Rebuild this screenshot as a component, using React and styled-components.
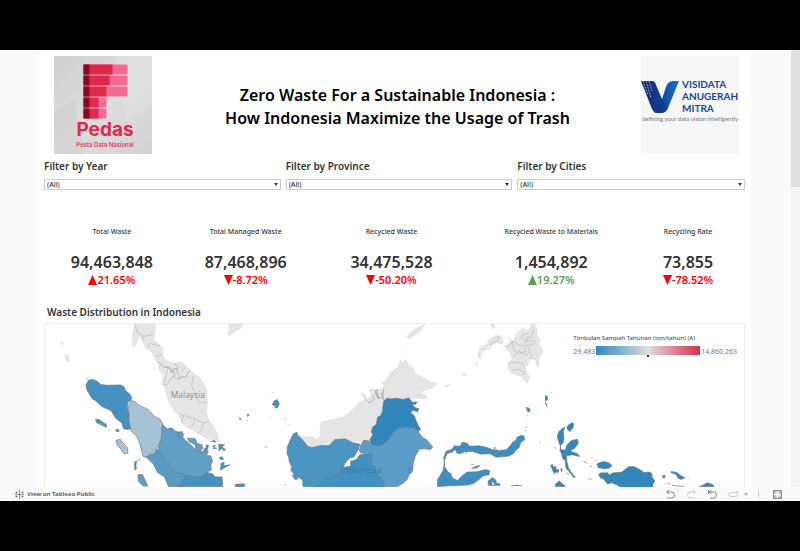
import React from "react";
import styled, { createGlobalStyle } from "styled-components";

const Global = createGlobalStyle`
  * { box-sizing: border-box; }
  body { margin: 0; background: #000; color: #333; font-family: "Noto Sans", "Open Sans", sans-serif; }
  h1, h2, p { margin: 0; }
`;

const Stage = styled.div`
  display: flex;
  flex-direction: column;
  height: 100vh;
  padding: 50px 0;
  background: #000;
`;

const Viewport = styled.div`
  flex: 1;
  min-height: 0;
  display: flex;
  background: #fafafa;
`;

const Canvas = styled.div`
  flex: 1;
  min-width: 0;
  display: flex;
  padding: 0 40px 0 38px;
`;

const Sheet = styled.main`
  flex: 1;
  min-width: 0;
  display: flex;
  flex-direction: column;
  padding: 6px 6px 0;
  background: #fff;
`;

const Track = styled.div`
  width: 9px;
  background: #f5f5f5;
`;

const Thumb = styled.div`
  height: 137px;
  background: #e0e0e0;
`;

const Header = styled.header`
  display: flex;
  justify-content: space-between;
  align-items: flex-start;
  padding: 0 6px 0 10px;
`;

const Logo = styled.svg`
  flex: none;
  display: block;
  width: 98px;
  height: 98px;
`;

const Title = styled.h1`
  padding: 28px 0 0 2px;
  color: #000;
  font-size: 16px;
  font-weight: 600;
  line-height: 23px;
  text-align: center;
`;

const Filters = styled.div`
  display: grid;
  grid-template-columns: 237fr 227fr 228fr;
  gap: 5px;
  padding-top: 5px;
`;

const Field = styled.label`
  display: flex;
  flex-direction: column;
  gap: 6px;
  font-size: 10px;
  font-weight: 600;
  line-height: 14px;
`;

const SelectWrap = styled.span`
  display: flex;
  align-items: center;
  border: 1px solid #ccc;
`;

const Select = styled.select`
  flex: 1;
  height: 9px;
  padding: 0 2px;
  border: 0;
  appearance: none;
  background: #fff;
  color: #333;
  font: 500 7px/9px "Noto Sans", sans-serif;
`;

const Caret = styled.svg`
  width: 4px;
  height: 3px;
  margin-right: 2px;
`;

const Metrics = styled.section`
  display: grid;
  grid-template-columns: 136fr 132fr 160fr 160fr 114fr;
  padding-top: 37px;
  text-align: center;
`;

const MetricName = styled.h2`
  font-size: 7px;
  font-weight: 500;
  line-height: 10px;
`;

const MetricValue = styled.p`
  padding-top: 14px;
  font-size: 16px;
  font-weight: 600;
  line-height: 22px;
`;

const MetricChange = styled.p`
  display: flex;
  justify-content: center;
  align-items: center;
  color: ${(p) => (p.$good ? "#59a14f" : "#ff0000")};
  font-size: 11px;
  font-weight: 600;
  line-height: 14px;
`;

const Arrow = styled.svg`
  width: 9px;
  height: 10px;
  fill: currentColor;
`;

const SectionTitle = styled.h2`
  padding: 18px 3px 4px;
  font-size: 10px;
  font-weight: 600;
  line-height: 14px;
`;

const MapPanel = styled.section`
  position: relative;
  flex: 1;
  min-height: 0;
  overflow: hidden;
  border: 1px solid #eee;
  border-bottom: 0;
`;

const MapDrawing = styled.svg`
  display: block;
  width: 100%;
  font-family: "Noto Sans", sans-serif;
`;

const Legend = styled.div`
  position: absolute;
  top: 9px;
  right: 7px;
  color: #555;
  font-size: 6px;
  font-weight: 500;
  line-height: 10px;
`;

const LegendRow = styled.div`
  display: flex;
  align-items: center;
  gap: 1px;
  padding-top: 3px;
  color: #777;
  font-size: 7px;
  font-weight: 400;
`;

const Ramp = styled.svg`
  width: 104px;
  height: 11px;
`;

const Footer = styled.footer`
  display: flex;
  align-items: center;
  justify-content: space-between;
  height: 14px;
  padding: 0 17px 0 15px;
  background: #fafafa;
`;

const FooterLink = styled.a`
  display: flex;
  align-items: center;
  gap: 3px;
  color: #666;
  font: 700 6px/10px "Noto Sans", sans-serif;
  text-decoration: none;
`;

const Tools = styled.div`
  display: flex;
  align-items: center;
  gap: ${(p) => (p.$tight ? 5 : 10)}px;
`;

const ToolButton = styled.button`
  display: flex;
  padding: 0;
  border: 0;
  background: none;
  color: ${(p) => (p.$dim ? "#ccc" : "#888")};
`;

const ToolIcon = styled.svg`
  width: ${(p) => p.$w || 11}px;
  height: 11px;
  fill: none;
  stroke: currentColor;
`;

const Divider = styled.span`
  width: 1px;
  height: 7px;
  margin-right: 3px;
  background: #ccc;
`;

const filters = ["Filter by Year", "Filter by Province", "Filter by Cities"];

const metrics = [
  { name: "Total Waste", value: "94,463,848", change: "21.65%", up: true },
  { name: "Total Managed Waste", value: "87,468,896", change: "-8.72%" },
  { name: "Recycled Waste", value: "34,475,528", change: "-50.20%" },
  { name: "Recycled Waste to Materials", value: "1,454,892", change: "19.27%", up: true, good: true },
  { name: "Recycling Rate", value: "73,855", change: "-78.52%" },
];

const bars = [
  [0, 29, 44],
  [11, 26, 44],
  [22, 23, 44],
  [33, 15, 23],
  [44, 15, 23],
];

function PedasLogo() {
  return (
    <Logo viewBox="0 0 98 98" role="img" aria-label="Pedas, Pesta Data Nasional">
      <defs>
        <linearGradient id="paper" x1="0" y1="0" x2="1" y2="1">
          <stop offset="0" stopColor="#cfcfd0" />
          <stop offset=".5" stopColor="#dededf" />
          <stop offset="1" stopColor="#d2d2d3" />
        </linearGradient>
      </defs>
      <path fill="url(#paper)" d="M0 0h98v98H0z" />
      <path fill="#c8c8c9" opacity=".4" d="M0 55l21-12 9 55H0z" />
      <path fill="#e4e4e4" opacity=".4" d="M60 0h38v50L73 66z" />
      {bars.map(([y, mid, end]) => (
        <g key={y} transform={`translate(29.500 ${y + 8.500})`}>
          <rect width={end} height="10" rx="1" fill="#f46a91" />
          <path fill="#df294c" d={`M0 0H${mid}V10H0z`} />
          <path fill="#850b20" d="M0 0h6v10H0z" />
        </g>
      ))}
      <text x="51" y="80" textAnchor="middle" fontFamily="Inter, sans-serif" fontSize="19" fontWeight="700" fill="#df294c">Pedas</text>
      <text x="51" y="91" textAnchor="middle" fontFamily="Inter, sans-serif" fontSize="6" fontWeight="500" fill="#df294c">Pesta Data Nasional</text>
    </Logo>
  );
}

function VisidataLogo() {
  return (
    <Logo viewBox="0 0 98 98" role="img" aria-label="Visidata Anugerah Mitra">
      <defs>
        <linearGradient id="vee" x1="0" y1="0" x2="1" y2="0">
          <stop offset="0" stopColor="#0b2968" />
          <stop offset=".5" stopColor="#143c94" />
          <stop offset="1" stopColor="#127ac8" />
        </linearGradient>
      </defs>
      <path fill="#f6f6f6" d="M0 0h98v98H0z" />
      <path fill="url(#vee)" d="M0 25h11q3 0 4 4l6 14 4-12q2-6 7-6h6L27 52q-2 5-7 5h-4q-3 0-5-4z" />
      <path fill="none" stroke="#f6f6f6" strokeWidth=".6" strokeDasharray="2 1" d="M2 25l5 14M5 25l5 17M8 25l3 10" />
      <path fill="#0a2f7d" d="M21 43l-8 14h7q5 0 7-5z" opacity=".45" />
      <g fontFamily="Lato, sans-serif" fontSize="10" fontWeight="700" fill="#17469b">
        <text x="41" y="32">VISIDATA</text>
        <text x="41" y="44">ANUGERAH</text>
        <text x="41" y="56">MITRA</text>
      </g>
      <text x="49" y="65" textAnchor="middle" fontFamily="Lato, sans-serif" fontSize="6" fill="#777">defining your data vision intelligently</text>
    </Logo>
  );
}

const land = { fill: "#e5e5e5", stroke: "#dcdcdc", strokeWidth: 1 };
const border = { fill: "none", stroke: "#b8b8b8", strokeWidth: 2 };
const edge = { stroke: "#77797b", strokeWidth: 2, strokeLinejoin: "round" };

function WasteMap() {
  return (
    <MapDrawing viewBox="0 0 700 163" role="img" aria-label="Map of waste by province">
      {/* Malay Peninsula and Sumatra */}
      <g transform="translate(-4 -4) scale(.333333)">
        <path {...land} d="M280 12H341L345 24 341 46 338 56 353 72 365 84 367 108 376 122 400 130 419 124 432 132 444 148 462 162 480 175 497 206 501 248 497 275 505 302 518 319 531 342 536 365 523 368 508 358 490 354 468 338 445 326 424 310 412 286 396 267 381 241 374 209 362 183 368 168 356 151 351 133 342 114 333 97 314 84 305 65 295 49 286 74 276 81 274 51z" />
        <path {...border} d="M283 14l7 25 17 10 21-3 10-4M305 62l4-14M322 82l6-11 17 4 15 3M346 110l18-7M382 143l-9 33-5 20 12-3 14-23 17 9M418 177l-9-24 1-16-14-8M421 155l13-12M457 169l-4 30 14 28 6 22 25-1M421 309l7-23 33 11 27 12 18-5M424 288l-4-10M461 297l-4 19-14 9M488 309l-8 24-10 7" />
        <path fill="none" stroke="#8f8f8f" strokeWidth="2" d="M352 125l16 16 19 3 5 15 8-13 12 2M411 179l11-8 14 1 5-11 6-10M392 148l8 8 0 15" />
        <path {...land} d="M562 12h38v14l-15 5-20 16-4-7 5-14zM32 19l5 3-3 3zM59 63l9 8-3 8zM73 104l8 3 4 17-8 1-4-10zM337 137l7 9-5 4z" />
        <path fill="#4592c2" {...edge} d="M142 181l14-3 14 7 9 9 23 2 37-1 10 5 5 12 14 12 5 13-12 10-2 18 6 16-1 22 7 24-11 2-12-2-5-17-19-15-13-22-28-13-20-18-10-6-7-12-9-16-2-11z" />
        <path fill="#a6c3d6" {...edge} d="M261 264l8-22 14 3 10 10 29 14 18 20 18 9 8 15-3 17 5 27-5 15-11 4-6 10 3 12-17-1-13 15-12-1-9-35-9-27-18-15-7-33 1-22z" />
        <path fill="#609fc6" {...edge} d="M365 314l14 13 14-3 11 10 10 3 17 21 15 14 15 13 14 11 13-1 5-11 10 10-6 12 12 3 7 14-6 13 2 14-13 8-4 10-14 1-10 9-16 1-21-3-22-9-17-3-3-17-20-17-10-12-15-4-5-12 9-12 4-16 6-18z" />
        <path fill="#5a9bc4" {...edge} d="M316 412l17-10 13-1 0-14 13 15 4 10 20 16 5 18 20 12 21 5 6 13-8 12-1 12h-43l-12-28-21-14-13-26z" />
        <path fill="#4492c3" {...edge} d="M408 501l18-8 2-16 8-12 26 6 20-1 18-12 17 5 5 8 16 1 6-1 2 30z" />
        <path fill="#609fc6" {...edge} d="M291 465l14-1 16 35h-14l-14-14zM411 337l13-2 4 9-3 9-12-2zM440 355l23 1 7 15 13 3 3 13-10 8-9-3-5-19-17-7z" />
        <path fill="#a6c3d6" {...edge} d="M225 362l13-4 9 12 13 14 1 16-12 2-10-16-9-7z" />
        <path fill="#4492c3" {...edge} d="M164 299l9-1 14 10 9 5 1 9-11-4-11-6-8-3zM202 331l3 3M224 330l8-2 3 6-8 2zM136 176l4 2M144 170l3 3M282 425l5-1-2 13 2 10-5 4-1-14zM288 421l12-1M283 350l6 4M495 375l8 2-2 11-7-2 2 12M514 379l10-2-8 10 14-2M534 373l18 2-9 5 12 10-13-3-7 7zM544 392l10 1M506 405l9 7M500 428l7 2M535 413l10-2 3 8-11-1M539 432l11-5-1 11 18-3-14 8-13 8-1-9M584 496l13-3 6 8h-18zM482 402l11-6M509 366l12-4 5 5" />
        <text x="390" y="234" fontSize="25" fill="#858585" stroke="#f1f1f1" strokeWidth="2" paintOrder="stroke">Malaysia</text>
      </g>
      {/* Borneo */}
      <g transform="translate(185 -4) scale(.333333)">
        <path {...land} d="M202 342L230 351 248 350 261 360 272 350 271 330 274 305 307 299 337 293 356 280 377 262 391 245 414 236 428 226 440 210 458 205 465 196 455 190 470 180 482 160 496 148 508 138 512 120 519 130 528 117 537 134 550 142 556 160 580 172 605 186 620 190 614 202 590 210 573 218 594 228 590 236 560 236 520 240 470 245 460 300 430 370 400 368 340 362 300 385 240 388z" />
        <path {...land} d="M532 49l20-19 20-11 17-7-19 24-20 14-13 6zM522 72l3 8M646 199l14-5v4l-12 4M530 92l-5 15M0 23l12-11h32l-20 15-13 13-11 7M588 331h4" />
        <path {...border} stroke="#9c9c9c" d="M394 222l10 4 4 12 10 11 12-6 3-9-11-22 8-3 9 14 8 14-10-26 6-1 3 23 13 1-2-18M463 206l-3 20 2 15" />
        <path fill="#4b95c3" {...edge} d="M191 342l11-5 2 9 11 10 20 24 12 3 26-6 25 1 18-19 31-2 21 11 23 5-5 16-12 22-15 4-13 16-8 18-38 6-20 14-19 10-14 13-15 8h-11l-2-20-12-7-8 8-12-15 8-1-11-13 2-12-7-14-2-14-5-10 1-21 7-16z" />
        <path fill="#4b95c3" d="M219 500v-20l60-30 85-12-20 20-34 14-23 13-28 17z" />
        <path fill="#4190c2" {...edge} d="M257 502l10-11 23-16 34-16 20-1 19-20-1-13 19-6 9-14 23-3 20-5 8 12-9 10 8 17 2 14 12 15 17 15-5 13 1 11z" />
        <path fill="#5b9dc6" {...edge} d="M389 392l5-17 9-14 17 3 8 8 20 6 17-7 14-14 11-20 14-13 19-7 25 1 16 8 5 14 11 13 13 8 10 13 7 7-7 8-18-2-16 1-12 22-6 22-1 21-10 10-8 18-11 9-16 10h-46l5-15-10-9-12-16-4-18-10-8-4-10 6-14-7-13-17 4-13-2z" />
        <path fill="#3087ba" {...edge} d="M422 358l8-14-5-8 5-15 10-7 4-22 10-5 5-14 3-29 10-9 14 2 17-2 17 4 18-5 11 13 14-1-4 7-11 1 10 10 10 2-3 10-16-5-5 8 11 9 3 10 6 14 9 16-4 5-22-10-24-1-20 5-15 15-10 17-17 14-14 5-20-4z" />
        <path fill="#4190c2" {...edge} d="M133 243l10-4 6 13-5 11-6 2-2-7-8-4zM126 217l3 2M29 294l5 2-3 5zM51 283l7 1-4 7M52 300l2 3M119 294h2M165 296l4 1M174 314l3 1M105 383l8-3M14 496l12-4 3 8M31 493l13-1v8h-14M165 497l5-3M191 478l8-9M537 442l10 4-9 8 9 3-7 5" />
        <text x="331" y="459" fontSize="27" fill="#347fac">Indonesia</text>
      </g>
      {/* Mindanao, Sulawesi and Maluku */}
      <g transform="translate(385 -4) scale(.333333)">
        <path {...land} d="M304 12h12l7 11 1 22 9 14-3 15 9 13 0 18-11 8 0 29-7-6-2-15-13-6-8 12-3 12-8-3-2 14 13 12 3 9-8 20-10-9-4-12-18-4-18-8-8-17 2-12 11-14-5-17-13-10 4-17 19-12 9-19 18-16 12 7 10-6zM153 81l17-6 10-18 15-8 12-5 12 10 3 14-10 6-8-8-11 8-12 1-14 12-12 15-2 16-8-4 2-18zM182 12h13l2 10-9 4zM137 126l8 5-3 8zM94 163l17-1 4 2-12 3zM0 187l12 1 10 5-9 8-13 4zM46 199l19-6M206 29l4 3" />
        <path {...border} d="M208 48l-5 17-14 2-10 19-15 3M221 81l18-1 12-17 24 16 14-8 4-20 12 2 10-26M238 55l11 13 5 24 16 8 18-5 2-18 22-4 9-10M253 110l15-18 20 14 13-9-1-17M281 55l11 9 23-2M236 132l13-6 31 5 10 18-9 17M247 151l21-3 14 8M299 96l9 10-6 8 12 3M273 57l11-15 14-2" />
        <path fill="#3d8fc1" {...edge} d="M24 500v-20l17-28 5-29-4-7 8-22 18-6 7-10 18 1 5-12 16 3 5 9 29-1 22 4 20 8 18 2 22-2 11-11 9-12 10-6 3-9 14-6 7 3 2 10-12 10-5 15-8 5-8 12-16 8-20 2-17 1-18-10-27 1-25-8-24 1-15 6-9-3-5-11-8 9-16 4-8 20 0 19 11 17 8 4 5 14 15 7 14-13 15-12 29-1 27-7 12 4-2 12-18 3-12 11-18 13-17 4z" />
        <path fill="none" {...edge} d="M109 403l4-17 12-5M192 392l5-10 10 20M41 452l1 27M32 500l7-16" />
        <path fill="#3d8fc1" {...edge} d="M124 433l10 1M126 446l12-6 14-3-8 7-13 2M177 498l-1-14 14-11 9 8 3 10 9 0 1 7M187 483l1 14 8-2M245 499l17-3 17 3M289 304l2 3M288 321l4 2M294 286l2 2M286 331l4 2M291 263l9 2 3 8-7 4zM347 227l7 2 1 10-8 5M347 247l6 5-1 9M366 217l2 1M332 367h3" />
        <path fill="#3087ba" {...edge} d="M415 318l12-9 6 2-1 11-9 13-8-5-2-7zM384 351l4-15 11-10 8-4-5 13 2 19-2 14-8 9 0 12 15 2 3-15 15-14 18-4 2 12-11 16-12 5 7 6 13 4 8 9-24-5-17 3 2 18 5 19 9 14 11 13-4 2-16-21-7-6-4-28-6-1-5-19-4-5 2-14-4-9zM375 383l6 3M363 436l8-1 1 7 8-2 0 9 9 1-3 8-8-1-4 6M370 445l12 12M393 447l6 1-2 9M379 493l11-9 19 16h-31zM411 460l8 1M462 423l12 8M486 413l3 4M483 439l5 2M478 477l10 1M497 422h4M502 434l16-8 13 7 9 0v12l-17 2-10-6M511 460l15-1 14 15v17l-12-9z" />
      </g>
      {/* Papua */}
      <g transform="translate(555 46) scale(.333333)">
        <path fill="#3087ba" {...edge} d="M-6 282l6-2 16-5 15 5 7 7-5 6-11-2-7 5-18-2zM-2 314l14-2 12-4 8 8 6-6 30-3 20-16 16-1 18 9 12 9 17-1 7 4 1 11 8 12-6 11 1 9H68l-16-9-15-6-12 4-12-15-9-3zM190 318l7-2 1 7-6 2zM216 305l18 3 10 9 14 7-13 5-8-4-7-12-14-4zM205 341l8 1M219 347l36 3M301 351l14-7 9-5 16 5 6 7zM361 345h2M268 328h2" />
      </g>
    </MapDrawing>
  );
}

export default function App() {
  return (
    <>
      <Global />
      <Stage>
        <Viewport>
          <Canvas>
            <Sheet>
              <Header>
                <PedasLogo />
                <Title>
                  Zero Waste For a Sustainable Indonesia :<br />
                  How Indonesia Maximize the Usage of Trash
                </Title>
                <VisidataLogo />
              </Header>
              <Filters>
                {filters.map((name) => (
                  <Field key={name}>
                    {name}
                    <SelectWrap>
                      <Select>
                        <option>(All)</option>
                      </Select>
                      <Caret viewBox="0 0 4 3"><path fill="#333" d="M0 0h4L2 3z" /></Caret>
                    </SelectWrap>
                  </Field>
                ))}
              </Filters>
              <Metrics>
                {metrics.map((m) => (
                  <div key={m.name}>
                    <MetricName>{m.name}</MetricName>
                    <MetricValue>{m.value}</MetricValue>
                    <MetricChange $good={m.good}>
                      <Arrow viewBox="0 0 9 10"><path d={m.up ? "M0 10L4.500 0 9 10z" : "M0 0h9L4.500 10z"} /></Arrow>
                      {m.change}
                    </MetricChange>
                  </div>
                ))}
              </Metrics>
              <SectionTitle>Waste Distribution in Indonesia</SectionTitle>
              <MapPanel>
                <WasteMap />
                <Legend>
                  Timbulan Sampah Tahunan (ton/tahun) (A)
                  <LegendRow>
                    29,483
                    <Ramp viewBox="0 0 104 11" preserveAspectRatio="none">
                      <defs>
                        <linearGradient id="ramp">
                          <stop offset="0" stopColor="#3289bd" />
                          <stop offset=".25" stopColor="#82b2d0" />
                          <stop offset=".5" stopColor="#dfdfdf" />
                          <stop offset=".75" stopColor="#dd8494" />
                          <stop offset="1" stopColor="#d4304b" />
                        </linearGradient>
                      </defs>
                      <path fill="url(#ramp)" d="M0 0h104v9H0z" />
                      <path fill="#333" d="M51 9h2v2h-2z" />
                    </Ramp>
                    14,860,263
                  </LegendRow>
                </Legend>
              </MapPanel>
            </Sheet>
          </Canvas>
          <Track><Thumb /></Track>
        </Viewport>
        <Footer>
          <FooterLink href="#">
            <ToolIcon $w={9} viewBox="0 0 9 11"><path d="M4.500 3.500v4M2.500 5.500h4M4.500 1v2M4.500 8v2M0 5.500h2M7 5.500h2M1.500 2.500v2M.5 3.500h2M7.500 2.500v2M6.500 3.500h2M1.500 6.500v2M.5 7.500h2M7.500 6.500v2M6.500 7.500h2" strokeWidth=".8" /></ToolIcon>
            View on Tableau Public
          </FooterLink>
          <Tools>
            <ToolButton aria-label="Undo"><ToolIcon viewBox="0 0 11 11"><path d="M4 1L1.500 3 4 5M2 3h5q2.500 0 2.500 3T7 9H2" /></ToolIcon></ToolButton>
            <ToolButton aria-label="Redo" $dim><ToolIcon viewBox="0 0 11 11"><path d="M7 1l2.500 2L7 5M9 3H4Q1.500 3 1.500 6T4 9h5" /></ToolIcon></ToolButton>
            <ToolButton aria-label="Revert"><ToolIcon viewBox="0 0 11 11"><path d="M1.500 1v4M4.500 1L2 3l2.500 2M2 3h5q2.500 0 2.500 3T7 9H3" /></ToolIcon></ToolButton>
            <Tools $tight>
              <ToolButton aria-label="Refresh" $dim><ToolIcon viewBox="0 0 11 11"><path d="M8 1.500l2 2-2 2M10 3.500H3q-2 0-2 2t2 2h5q2 0 2-2" /></ToolIcon></ToolButton>
              <ToolButton aria-label="More refresh options" $dim><ToolIcon $w={4} viewBox="0 0 4 11"><path fill="#aaa" stroke="none" d="M0 4h4L2 7z" /></ToolIcon></ToolButton>
            </Tools>
            <Divider />
            <ToolButton aria-label="Full screen"><ToolIcon viewBox="0 0 11 11"><path d="M1.500 1.500h8v8h-8z" /><path strokeWidth=".8" d="M3 5V3h2M6 3h2v2M8 6v2H6M5 8H3V6M2 2l1 1M9 2L8 3M2 9l1-1M9 9L8 8" /></ToolIcon></ToolButton>
          </Tools>
        </Footer>
      </Stage>
    </>
  );
}
